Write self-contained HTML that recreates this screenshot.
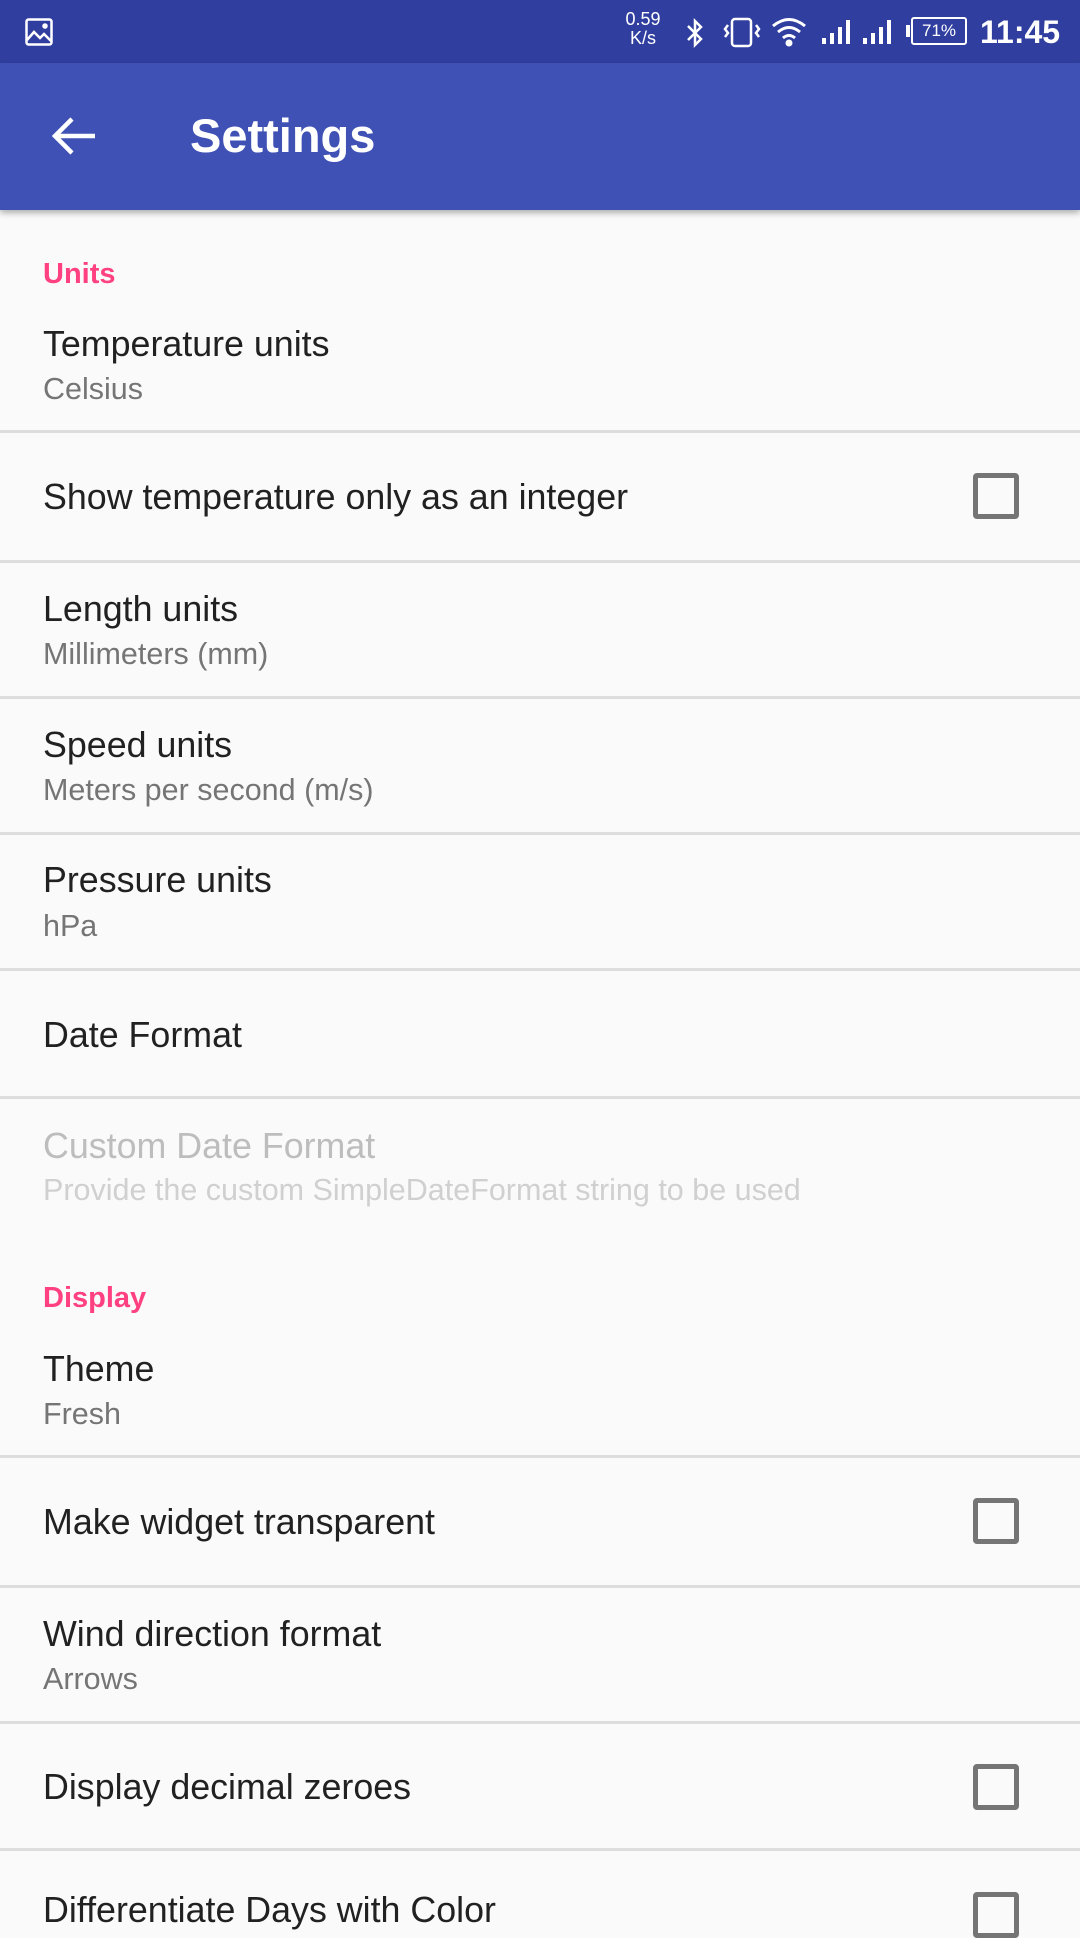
<!DOCTYPE html>
<html><head><meta charset="utf-8"><style>
*{margin:0;padding:0;box-sizing:border-box}
body{width:1080px;height:1920px;overflow:hidden;background:#fafafa;font-family:"Liberation Sans",sans-serif;position:relative}
.sb{position:absolute;left:0;top:0;width:1080px;height:63px;background:#303f9f}
.tb{position:absolute;left:0;top:63px;width:1080px;height:147px;background:#3f51b5;box-shadow:0 3px 6px rgba(0,0,0,.3)}
.t{position:absolute;left:43px;height:44px;line-height:44px;font-size:35.8px;color:#212121;white-space:nowrap}
.s{position:absolute;left:43px;height:36px;line-height:36px;font-size:30.5px;color:#757575;white-space:nowrap}
.h{position:absolute;left:43px;height:36px;line-height:36px;font-size:29px;color:#ff4081;font-weight:bold}
.d{position:absolute;left:0;width:1080px;height:3px;background:#dddddd}
.cb{position:absolute;left:973px;width:46px;height:46px;border:5px solid #757575;border-radius:4px}
</style></head><body>
<div class="sb">
<svg style="position:absolute;left:25px;top:18px" width="28" height="28" viewBox="0 0 28 28" fill="none" stroke="#fff" stroke-width="2.5"><rect x="1.5" y="1.5" width="25" height="25" rx="2"/><path d="M2 22 L9 14 L15 20 L19 16 L26 23"/><circle cx="20" cy="8" r="1.5" fill="#fff"/></svg>
<div style="position:absolute;left:618px;top:10px;color:#fff;font-size:18px;line-height:19px;text-align:center;width:50px">0.59<br>K/s</div>
<svg style="position:absolute;left:683px;top:17px" width="24" height="32" viewBox="0 0 24 32" fill="none" stroke="#fff" stroke-width="2.5"><path d="M5 9 L18 22 L12 28 L12 4 L18 10 L5 23"/></svg>
<svg style="position:absolute;left:722px;top:16px" width="40" height="32" viewBox="0 0 40 32" fill="none" stroke="#fff" stroke-width="2.5"><rect x="10" y="3" width="19" height="27" rx="3"/><path d="M6 9 L3 13 L6 17 L3 21 M34 9 L37 13 L34 17 L37 21"/></svg>
<svg style="position:absolute;left:770px;top:16px" width="40" height="32" viewBox="0 0 40 32" fill="none" stroke="#fff" stroke-width="3"><path d="M3 10 Q19 -3 35 10 M8 16 Q19 7 30 16 M13 22 Q19 17 25 22"/><circle cx="19" cy="27" r="2" fill="#fff"/></svg>
<svg style="position:absolute;left:820px;top:18px" width="110" height="28" viewBox="0 0 110 28" fill="#fff"><rect x="2" y="20" width="4" height="6"/><rect x="10" y="15" width="4" height="11"/><rect x="18" y="9" width="4" height="17"/><rect x="26" y="2" width="4" height="24"/><rect x="43" y="20" width="4" height="6"/><rect x="51" y="15" width="4" height="11"/><rect x="59" y="9" width="4" height="17"/><rect x="67" y="2" width="4" height="24"/></svg>
<div style="position:absolute;left:906px;top:25px;width:4px;height:12px;background:#fff"></div>
<div style="position:absolute;left:911px;top:17px;width:56px;height:28px;border:2.5px solid #fff;border-radius:3px;color:#fff;font-size:17px;line-height:23px;text-align:center">71%</div>
<div style="position:absolute;left:980px;top:12px;color:#fff;font-size:32px;font-weight:bold;line-height:40px">11:45</div>
</div>
<div class="tb">
<svg style="position:absolute;left:50px;top:50px" width="48" height="48" viewBox="0 0 48 48" fill="none" stroke="#fff" stroke-width="4.5"><path d="M45 23 L6 23 M22 6 L5 23 L22 40"/></svg>
<div style="position:absolute;left:190px;top:44px;color:#fff;font-size:47px;font-weight:bold;line-height:58px">Settings</div>
</div>

<div class="h" style="top:256px">Units</div>
<div class="t" style="top:322px">Temperature units</div>
<div class="s" style="top:371px">Celsius</div>
<div class="d" style="top:430px"></div>
<div class="t" style="top:475px">Show temperature only as an integer</div>
<div class="cb" style="top:473px"></div>
<div class="d" style="top:560px"></div>
<div class="t" style="top:587px">Length units</div>
<div class="s" style="top:636px">Millimeters (mm)</div>
<div class="d" style="top:696px"></div>
<div class="t" style="top:723px">Speed units</div>
<div class="s" style="top:772px">Meters per second (m/s)</div>
<div class="d" style="top:832px"></div>
<div class="t" style="top:858px">Pressure units</div>
<div class="s" style="top:908px">hPa</div>
<div class="d" style="top:968px"></div>
<div class="t" style="top:1013px">Date Format</div>
<div class="d" style="top:1096px"></div>
<div class="t" style="top:1124px;color:#bdbdbd">Custom Date Format</div>
<div class="s" style="top:1172px;color:#d0d0d0">Provide the custom SimpleDateFormat string to be used</div>
<div class="h" style="top:1280px">Display</div>
<div class="t" style="top:1347px">Theme</div>
<div class="s" style="top:1396px">Fresh</div>
<div class="d" style="top:1455px"></div>
<div class="t" style="top:1500px">Make widget transparent</div>
<div class="cb" style="top:1498px"></div>
<div class="d" style="top:1585px"></div>
<div class="t" style="top:1612px">Wind direction format</div>
<div class="s" style="top:1661px">Arrows</div>
<div class="d" style="top:1721px"></div>
<div class="t" style="top:1765px">Display decimal zeroes</div>
<div class="cb" style="top:1764px"></div>
<div class="d" style="top:1848px"></div>
<div class="t" style="top:1888px">Differentiate Days with Color</div>
<div class="cb" style="top:1892px"></div>
</body></html>
